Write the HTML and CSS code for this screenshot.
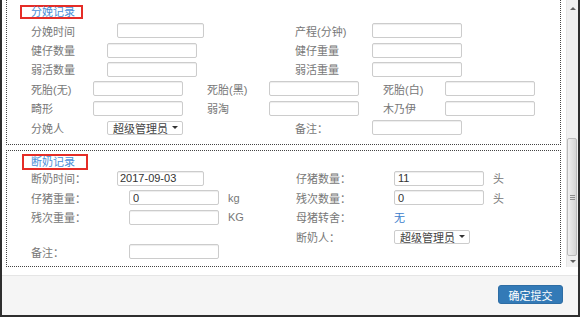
FILE: index.html
```html
<!DOCTYPE html>
<html lang="zh-CN">
<head>
  <meta charset="UTF-8" />
  <meta name="viewport" content="width=device-width, initial-scale=1.0"/>
  <title>分娩断奶记录</title>
  <link rel="stylesheet" href="styles.css">
</head>
<body>

  <div class="modal">
    <div class="modal-body">
      <div class="scroll-area">

        <!-- 分娩记录 -->
        <div class="record-box record-birth">
          <div class="box-title"><span class="mark mark-birth">分娩记录</span></div>

          <div class="row">
            <div class="half">
              <label class="lbl lbl-l">分娩时间</label>
              <input type="text" class="field field-87">
            </div>
            <div class="half">
              <label class="lbl lbl-n">产程(分钟)</label>
              <input type="text" class="field">
            </div>
          </div>

          <div class="row">
            <div class="half">
              <label class="lbl lbl-m">健仔数量</label>
              <input type="text" class="field">
            </div>
            <div class="half">
              <label class="lbl lbl-n">健仔重量</label>
              <input type="text" class="field">
            </div>
          </div>

          <div class="row">
            <div class="half">
              <label class="lbl lbl-m">弱活数量</label>
              <input type="text" class="field">
            </div>
            <div class="half">
              <label class="lbl lbl-n">弱活重量</label>
              <input type="text" class="field">
            </div>
          </div>

          <div class="row">
            <div class="third">
              <label class="lbl lbl-s">死胎(无)</label>
              <input type="text" class="field">
            </div>
            <div class="third">
              <label class="lbl lbl-s">死胎(黑)</label>
              <input type="text" class="field">
            </div>
            <div class="third">
              <label class="lbl lbl-s">死胎(白)</label>
              <input type="text" class="field">
            </div>
          </div>

          <div class="row">
            <div class="third">
              <label class="lbl lbl-s">畸形</label>
              <input type="text" class="field">
            </div>
            <div class="third">
              <label class="lbl lbl-s">弱淘</label>
              <input type="text" class="field">
            </div>
            <div class="third">
              <label class="lbl lbl-s">木乃伊</label>
              <input type="text" class="field">
            </div>
          </div>

          <div class="row">
            <div class="half">
              <label class="lbl lbl-m">分娩人</label>
              <div class="select"><span>超级管理员</span><i class="caret"></i></div>
            </div>
            <div class="half">
              <label class="lbl lbl-n">备注：</label>
              <input type="text" class="field">
            </div>
          </div>
        </div>

        <!-- 断奶记录 -->
        <div class="record-box record-wean">
          <div class="box-title"><span class="mark mark-wean">断奶记录</span></div>

          <div class="row row-b">
            <div class="half half-b">
              <label class="lbl lbl-l">断奶时间：</label>
              <input type="text" class="field field-87" value="2017-09-03">
            </div>
            <div class="half half-b">
              <label class="lbl lbl-xl">仔猪数量：</label>
              <input type="text" class="field" value="11">
              <span class="unit">头</span>
            </div>
          </div>

          <div class="row row-b">
            <div class="half half-b">
              <label class="lbl lbl-xl">仔猪重量：</label>
              <input type="text" class="field" value="0">
              <span class="unit">kg</span>
            </div>
            <div class="half half-b">
              <label class="lbl lbl-xl">残次数量：</label>
              <input type="text" class="field" value="0">
              <span class="unit">头</span>
            </div>
          </div>

          <div class="row row-b">
            <div class="half half-b">
              <label class="lbl lbl-xl">残次重量：</label>
              <input type="text" class="field">
              <span class="unit">KG</span>
            </div>
            <div class="half half-b">
              <label class="lbl lbl-xl">母猪转舍：</label>
              <span class="value-link">无</span>
            </div>
          </div>

          <div class="row row-b">
            <div class="half half-b"></div>
            <div class="half half-b">
              <label class="lbl lbl-xl">断奶人：</label>
              <div class="select"><span>超级管理员</span><i class="caret"></i></div>
            </div>
          </div>

          <div class="row row-note">
            <div class="half half-b">
              <label class="lbl lbl-xl">备注：</label>
              <input type="text" class="field">
            </div>
          </div>
        </div>

      </div>

      <div class="scrollbar">
        <div class="sb-btn sb-up"><i></i></div>
        <div class="sb-track">
          <div class="sb-thumb"><i class="sb-grip"></i></div>
        </div>
        <div class="sb-btn sb-down"><i></i></div>
      </div>
    </div>

    <div class="modal-footer">
      <button class="btn-submit">确定提交</button>
    </div>
  </div>

</body>
</html>
```

FILE: styles.css
```css
body {
  margin: 0;
  background-color: #2e2e2e;
  font-family: "Liberation Sans", "Noto Sans CJK SC", sans-serif;
  font-size: 11px;
  color: #777;
}

.modal {
  width: 576px;
  height: 315px;
  margin-left: 2px;
  background-color: #fff;
  display: flex;
  flex-direction: column;
}

.modal-body {
  display: flex;
  height: 267px;
  padding-bottom: 8px;
  border-bottom: 1px solid #e5e5e5;
}

.scroll-area {
  flex: 1;
  overflow: hidden;
  padding: 0 5px 0 4px;
}

/* dotted record boxes */
.record-box {
  border: 1px dotted #444;
  padding: 0 0 7px 24px;
}

.record-birth {
  border-top: none;
  padding-top: 5px;
  padding-bottom: 6.5px;
}

.record-wean {
  margin-top: 5px;
  padding-top: 3.5px;
}

.box-title {
  display: flex;
  align-items: flex-start;
}

.mark {
  display: inline-block;
  border: 2px solid #e52d27;
  color: #4a8fd8;
  font-size: 11px;
}

.mark-birth {
  margin: 0 0 2px -11px;
  padding: 0 6px 0 9px;
  line-height: 10px;
}

.mark-wean {
  margin: 0 0 -2px -9px;
  padding: 0 11px 0 7px;
  line-height: 12px;
}

.row {
  display: flex;
  align-items: center;
  height: 19.4px;
}

.row-b {
  height: 19.5px;
}

.row-note {
  height: 15px;
  margin-top: -2px;
}

.half {
  width: 264px;
  display: flex;
  align-items: center;
  flex: none;
}

.half-b {
  width: 265px;
}

.third {
  width: 176px;
  display: flex;
  align-items: center;
  flex: none;
}

.lbl {
  flex: none;
  white-space: nowrap;
}

.lbl-s { width: 62px; }
.lbl-m { width: 76px; }
.lbl-n { width: 77px; }
.lbl-l { width: 86px; }
.lbl-xl { width: 98px; }

.field {
  width: 90px;
  height: 15px;
  box-sizing: border-box;
  padding: 0 3px;
  border: 1px solid #ccc;
  border-radius: 2px;
  box-shadow: inset 0 1px 1px rgba(0, 0, 0, 0.075);
  background-color: #fff;
  font-family: inherit;
  font-size: 11px;
  color: #333;
  outline: none;
  flex: none;
}

.field-87 {
  width: 87px;
  padding-left: 2px;
}

.unit {
  margin-left: 9px;
  font-size: 11px;
}

.value-link {
  color: #3a7ccb;
}

.select {
  width: 76px;
  height: 14px;
  box-sizing: border-box;
  border: 1px solid #ccc;
  border-radius: 2px;
  padding: 0 4px 0 5px;
  display: flex;
  align-items: center;
  justify-content: space-between;
  color: #444;
  flex: none;
}

.caret {
  width: 0;
  height: 0;
  border-left: 3px solid transparent;
  border-right: 3px solid transparent;
  border-top: 3px solid #333;
}

/* fake system scrollbar */
.scrollbar {
  width: 12px;
  height: 267px;
  box-sizing: border-box;
  background-color: #f0f0f0;
  border-left: 1px solid #e6e6e6;
  display: flex;
  flex-direction: column;
}

.sb-btn {
  display: flex;
  align-items: center;
  justify-content: center;
}

.sb-up {
  height: 16px;
}

.sb-down {
  height: 11px;
}

.sb-up i {
  border-left: 3px solid transparent;
  border-right: 3px solid transparent;
  border-bottom: 3px solid #606060;
}

.sb-down i {
  border-left: 3px solid transparent;
  border-right: 3px solid transparent;
  border-top: 3px solid #606060;
}

.sb-track {
  flex: 1;
  padding-top: 122px;
}

.sb-thumb {
  height: 118px;
  box-sizing: border-box;
  margin: 0 1px 0 0;
  border: 1px solid #bcbcbc;
  border-radius: 2px;
  background: linear-gradient(to right, #f0f0f0, #d6d6d6);
  display: flex;
  align-items: center;
  justify-content: center;
}

.sb-grip {
  width: 5px;
  height: 5px;
  background: repeating-linear-gradient(to bottom, #8e8e8e 0 1px, transparent 1px 2px);
}

.modal-footer {
  flex: 1;
  background-color: #f5f5f5;
  display: flex;
  justify-content: flex-end;
  align-items: flex-start;
  padding: 9px 15px 0 0;
}

.btn-submit {
  width: 65px;
  height: 19px;
  padding: 0;
  background-color: #337ab7;
  border: 1px solid #2e6da4;
  border-radius: 3px;
  color: #fff;
  font-family: inherit;
  font-size: 11px;
}
```
